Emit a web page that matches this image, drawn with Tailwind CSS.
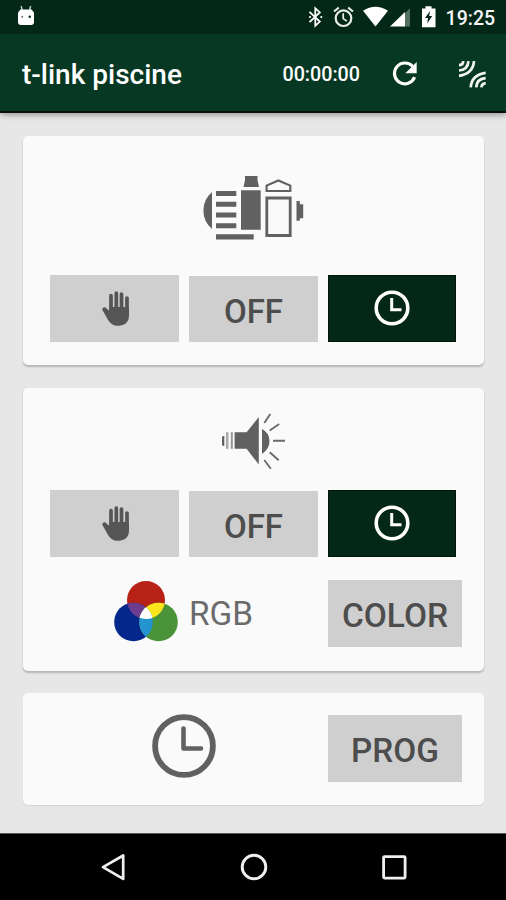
<!DOCTYPE html>
<html lang="fr">
<head>
<meta charset="utf-8">
<title>t-link piscine</title>
<script src="https://cdn.jsdelivr.net/npm/@tailwindcss/browser@4"></script>
</head>
<body class="w-[506px] h-[900px] overflow-hidden bg-[#e7e7e7] font-[Roboto,sans-serif] flex flex-col">
<svg width="0" height="0" class="absolute">
  <symbol id="hand" viewBox="0 0 28 35">
    <g fill="none" stroke="#555" stroke-width="3.7" stroke-linecap="round"><path d="M9 4.6v15M14.3 2v18M19.5 3.2v17M25 7v17M2.2 18.2l7 9"/></g>
    <path fill="#555" d="M7.2 16H26.9v9.5c0 5.5-4.3 9.2-10.4 9.2-5.3 0-8.2-2.2-10.7-6.3L.6 19.3l2.6-2.9 4 3.4z"/>
  </symbol>
  <symbol id="clock" viewBox="0 0 36 36">
    <circle cx="18" cy="18" r="15.8" fill="none" stroke="#fff" stroke-width="3.6"/>
    <path d="M17.7 8v11.8h9.8" fill="none" stroke="#fff" stroke-width="3"/>
  </symbol>
</svg>

<header class="shrink-0 relative z-10 shadow-[0_2px_6px_rgba(0,0,0,0.35)]">
  <div class="h-[34px] bg-[#042818] flex items-center pl-[17px] pr-[11px] text-white">
    <svg class="-mt-[3px]" width="18" height="21" viewBox="0 0 18 21"><path d="M4.2 1.2l1 4.3M13.6 1.2l-1 4.3" stroke="#c5cfca" stroke-width="1.5"/><path d="M3.5 4.5h11l2.5 3v9.5q0 3-3 3H4q-3 0-3-3V7.5z" fill="#fff"/><circle cx="5.2" cy="11.8" r="1" fill="#777"/><circle cx="12.7" cy="11.8" r="1.2" fill="#042818"/></svg>
    <svg class="ml-auto" width="187" height="26" viewBox="308 4.5 187 26">
      <path d="M309.5 12.3l10.3 9.8-4.5 4.2V8.7l4.5 4.2-10.3 9.8" fill="none" stroke="#fff" stroke-width="1.8"/><circle cx="310" cy="17.5" r="1.1" fill="#fff"/><circle cx="321.3" cy="17.5" r="1.1" fill="#fff"/>
      <g fill="none" stroke="#e9edeb"><circle cx="343.5" cy="18.7" r="7.8" stroke-width="2.2"/><path d="M343.2 13.8v5.3l3.7 2.5" stroke-width="1.7"/><path d="M334 12l4.8-3.9M353 12l-4.8-3.9" stroke-width="2"/></g>
      <path d="M363 11.2q12.5-8 25 0L375.5 27z" fill="#fff"/>
      <path d="M410 8.7V27h-5V13.7z" fill="#51705f"/><path d="M390 27l15-14.5V27z" fill="#fff"/>
      <path d="M422 9h3.5V6.7h6V9h4v18.7H422z" fill="#fff"/><path d="M430 11.5l-5 7h3l-.8 5.5 5-7.5h-3z" fill="#042818"/>
      <text x="445.6" y="25.2" font-size="20" font-weight="500" textLength="49.5" lengthAdjust="spacingAndGlyphs" fill="#f4f6f5">19:25</text>
    </svg>
  </div>
  <div class="h-[79px] bg-[#073824] border-b-2 border-[#061009] flex items-center pl-[22px] pr-[19px] text-white">
    <h1 class="text-[28px] font-medium leading-8 pt-[5px]">t-link piscine</h1>
    <span class="ml-auto text-[19.7px] font-medium leading-8 pt-[5px]">00:00:00</span>
    <svg class="ml-[32px] mt-[3px]" width="26" height="26" viewBox="0 0 26 26"><path d="M20.8 5.6A10.4 10.4 0 1 0 22.6 16.2" fill="none" stroke="#fff" stroke-width="3.2"/><path d="M24.7 1v11.3H13.3z" fill="#fff"/></svg>
    <svg class="ml-[40px] mt-[3px]" width="29" height="29" viewBox="0 0 29 29" fill="none" stroke="#f1f4f2" stroke-width="2.7"><path d="M1 5.2q4 0 4.3-4M1 10.5Q9.8 10 10.5 1.2M1 15.8Q15 14 16 1.2M27.7 23.4q-4 0-4.3 4M27.7 18.2q-8.8.4-9.5 9.2M27.7 12.8Q13.7 14.6 12.7 27.4"/></svg>
  </div>
</header>

<main class="flex-1 pt-[23px] pl-[23px] pr-[22px] flex flex-col gap-[22.5px]">
  <section class="h-[229px] rounded-[5px] bg-[#fafafa] shadow-[0_2px_2px_rgba(0,0,0,0.22)] pt-[39px] pl-[27px] shrink-0">
    <svg class="ml-[152px]" width="103" height="66" viewBox="202 175 103 66" fill="#616161">
      <path d="M212 192v37q-8.6-7.5-8.6-18.5T212 192z"/>
      <path d="M216 191h20.3v5H216zM216 201.8h20.3v5H216zM216 212.5h20.3v5H216zM216 223.3h20.3v5H216zM216 234.2h37.7v5.2H216z"/>
      <path d="M241 190.2h19.7v39.5H241zM245 176h12.5v4.2l1.5 6.8h-15.5l1.5-6.8z"/>
      <path d="M266.8 198h23.4v37.5h-23.4z" fill="none" stroke="#616161" stroke-width="2.8"/>
      <path d="M266.6 191v-5.4l11.7-5.2 12 5.2v5.4z" fill="none" stroke="#616161" stroke-width="2.2"/>
      <path d="M296.5 201h3.3v3.2h3.4v14h-3.4v2.6h-3.3z"/>
    </svg>
    <div class="mt-[33.5px] flex items-end gap-[10px]">
      <button class="w-[129px] h-[67.5px] bg-[#cfcfcf] flex items-center justify-center"><svg class="ml-[2px]" width="28" height="35"><use href="#hand"/></svg></button>
      <button class="w-[129px] h-[66.5px] bg-[#cfcfcf] text-[#4d4d4d] text-[33px] font-medium leading-[66px] pt-[3px]">OFF</button>
      <button class="w-[128px] h-[67.5px] bg-[#042818] border border-[#03140b] flex items-center justify-center"><svg class="-mt-[1px]" width="36" height="36"><use href="#clock"/></svg></button>
    </div>
  </section>

  <section class="h-[283px] rounded-[5px] bg-[#fafafa] shadow-[0_2px_2px_rgba(0,0,0,0.22)] pt-[24px] pl-[27px] shrink-0">
    <svg class="ml-[170px]" width="66" height="58" viewBox="220 412 66 58">
      <g fill="#616161"><path d="M224.3 436v10h-1q-1.3 0-1.3-2v-6q0-2 1.3-2zM234.6 432.2h12L258.8 417v47.5l-12.2-15.7h-12z"/><path d="M262 429q7.5 4 7.5 12t-7.5 13z"/></g>
      <path d="M227.2 432.2v16.6" stroke="#aaa" stroke-width="2.6"/><path d="M231.8 432.2v16.6" stroke="#949494" stroke-width="2"/>
      <path d="M264.3 423l6-9M269.7 430.5l9.5-6.5M273 440.8h12M269.7 452.2l9 8M264.3 460l6.5 8.7" stroke="#6b6b6b" stroke-width="1.9"/>
    </svg>
    <div class="mt-[20px] flex items-end gap-[10px]">
      <button class="w-[129px] h-[67.5px] bg-[#cfcfcf] flex items-center justify-center"><svg class="ml-[2px]" width="28" height="35"><use href="#hand"/></svg></button>
      <button class="w-[129px] h-[66.5px] bg-[#cfcfcf] text-[#4d4d4d] text-[33px] font-medium leading-[66px] pt-[3px]">OFF</button>
      <button class="w-[128px] h-[67.5px] bg-[#042818] border border-[#03140b] flex items-center justify-center"><svg width="36" height="36"><use href="#clock"/></svg></button>
    </div>
    <div class="mt-[22.5px] flex items-center pr-[22px]">
      <svg class="ml-[63px] -mt-[4px]" width="66" height="62" viewBox="113 580 66 62">
        <clipPath id="cr"><circle cx="146" cy="600" r="19"/></clipPath>
        <clipPath id="cb"><circle cx="133.5" cy="622" r="19.3"/></clipPath>
        <circle cx="146" cy="600" r="19" fill="#b72116"/>
        <circle cx="133.5" cy="622" r="19.3" fill="#03278a"/>
        <circle cx="158.5" cy="622" r="19.3" fill="#4b9338"/>
        <g clip-path="url(#cr)"><circle cx="133.5" cy="622" r="19.3" fill="#6c3c8e"/><circle cx="158.5" cy="622" r="19.3" fill="#fbe61e"/></g>
        <g clip-path="url(#cb)"><circle cx="158.5" cy="622" r="19.3" fill="#2494d0"/><g clip-path="url(#cr)"><circle cx="158.5" cy="622" r="19.3" fill="#fff"/></g></g>
      </svg>
      <span class="ml-[10px] text-[33.3px] leading-10 pt-[1px] text-[#6b6b6b]">RGB</span>
      <button class="ml-auto w-[134px] h-[67.5px] bg-[#cfcfcf] text-[#4d4d4d] text-[33.5px] font-medium leading-[66px] pt-[3px]">COLOR</button>
    </div>
  </section>

  <section class="h-[112px] rounded-[5px] bg-[#fafafa] shadow-[0_1px_1px_rgba(0,0,0,0.08)] pl-[129px] pr-[22px] shrink-0 flex items-center justify-between">
    <svg class="-mt-[6px]" width="64" height="64" viewBox="0 0 64 64" fill="none" stroke="#616161" stroke-linecap="round" stroke-linejoin="round"><circle cx="32" cy="32" r="28.9" stroke-width="5.8"/><path d="M31.5 14.5v20h17.5" stroke-width="4.6"/></svg>
    <button class="-mt-[1px] w-[134px] h-[67.5px] bg-[#cfcfcf] text-[#4d4d4d] text-[33.3px] font-medium leading-[66px] pt-[3px]">PROG</button>
  </section>
</main>

<nav class="h-[67px] shrink-0 bg-black border-t border-[#555] flex items-center justify-between pl-[100px] pr-[98px]">
  <svg width="28" height="30" viewBox="0 0 28 30" fill="none" stroke="#f0f0f0" stroke-width="2.7" stroke-linejoin="round"><path d="M23.2 3.5v23.4L3 15.2z"/></svg>
  <svg width="28" height="28" viewBox="0 0 28 28" fill="none" stroke="#f0f0f0" stroke-width="2.9"><circle cx="14" cy="14" r="11.8"/></svg>
  <svg width="28" height="28" viewBox="0 0 28 28" fill="none" stroke="#f0f0f0" stroke-width="2.8"><rect x="3.6" y="3.6" width="21.5" height="21.5" rx="1"/></svg>
</nav>
</body>
</html>
